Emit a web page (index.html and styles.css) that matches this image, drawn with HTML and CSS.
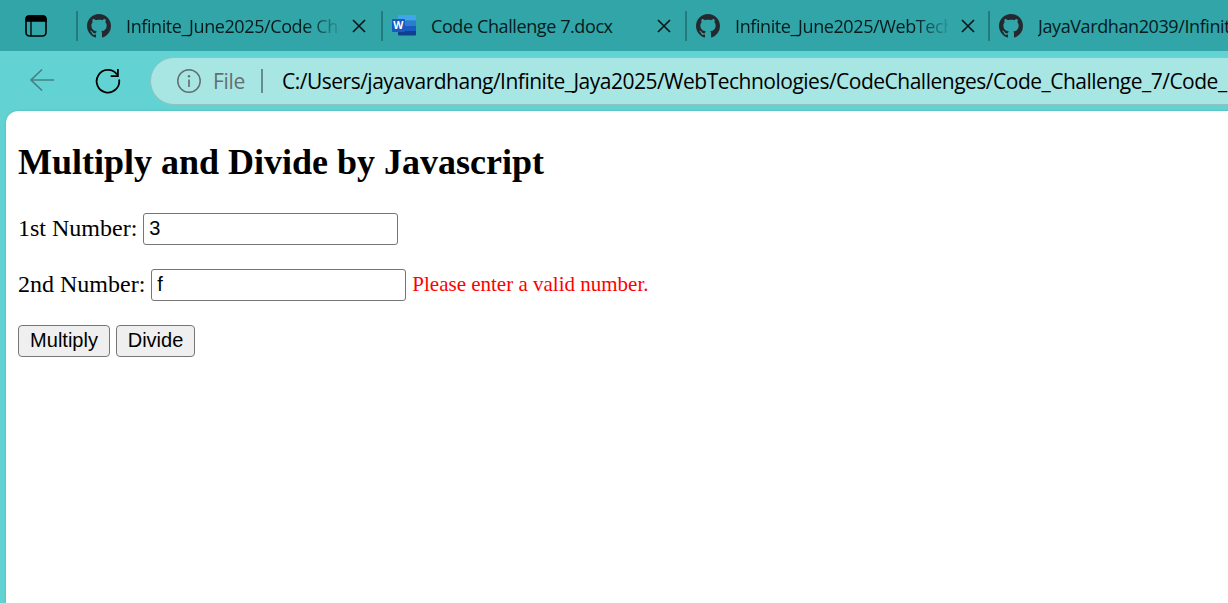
FILE: index.html
```html
<!DOCTYPE html>
<html lang="en">
<head>
<meta charset="utf-8">
<title>Multiply and Divide</title>
<link rel="stylesheet" href="styles.css">
</head>
<body>
<svg class="defs" aria-hidden="true">
  <symbol id="github" viewBox="0 0 16 16"><path fill="#24292f" d="M8 0C3.58 0 0 3.58 0 8c0 3.54 2.29 6.53 5.47 7.59.4.07.55-.17.55-.38 0-.19-.01-.82-.01-1.49-2.01.37-2.53-.49-2.69-.94-.09-.23-.48-.94-.82-1.13-.28-.15-.68-.52-.01-.53.63-.01 1.08.58 1.23.82.72 1.21 1.87.87 2.33.66.07-.52.28-.87.51-1.07-1.78-.2-3.64-.89-3.64-3.95 0-.87.31-1.59.82-2.15-.08-.2-.36-1.02.08-2.12 0 0 .67-.21 2.2.82.64-.18 1.32-.27 2-.27s1.36.09 2 .27c1.53-1.04 2.2-.82 2.2-.82.44 1.1.16 1.92.08 2.12.51.56.82 1.27.82 2.15 0 3.07-1.87 3.75-3.65 3.95.29.25.54.73.54 1.48 0 1.07-.01 1.93-.01 2.2 0 .21.15.46.55.38A8.01 8.01 0 0 0 16 8c0-4.42-3.58-8-8-8z"/></symbol>
  <symbol id="close" viewBox="0 0 14 14"><path d="M1 1l12 12M13 1L1 13" fill="none" stroke="#0a1a1b" stroke-width="1.7"/></symbol>
</svg>
<div class="browser">
  <header class="tabs">
    <div class="workspace">
      <svg width="22" height="22" viewBox="0 0 22 22"><rect x="1" y="1" width="20" height="20" rx="3.5" fill="none" stroke="#000" stroke-width="1.6"/><path d="M1 6V4a3 3 0 0 1 3-3h14a3 3 0 0 1 3 3v2zM6 6v15" stroke="#000" stroke-width="1.3"/></svg>
    </div>
    <div class="tab tab-first">
      <svg class="favicon"><use href="#github"/></svg>
      <span class="title fade">Infinite_June2025/Code Challenge</span>
      <svg class="close"><use href="#close"/></svg>
    </div>
    <div class="tab tab-word">
      <svg class="favicon" viewBox="0 0 24 24"><path fill="#41a5ee" d="M7 1h16a1 1 0 0 1 1 1v4.500H6V2a1 1 0 0 1 1-1z"/><path fill="#2b7cd3" d="M6 6.500h18V12H6z"/><path fill="#185abd" d="M6 12h18v5H6z"/><path fill="#103f91" d="M6 17h18v3.500a1 1 0 0 1-1 1H7a1 1 0 0 1-1-1z"/><rect y="5" width="13" height="13" rx="1" fill="#185abd"/><text class="word-letter" x="6.400" y="15.400">W</text></svg>
      <span class="title">Code Challenge 7.docx</span>
      <svg class="close"><use href="#close"/></svg>
    </div>
    <div class="tab tab-third">
      <svg class="favicon"><use href="#github"/></svg>
      <span class="title fade">Infinite_June2025/WebTechnologies</span>
      <svg class="close"><use href="#close"/></svg>
    </div>
    <div class="tab tab-last">
      <svg class="favicon"><use href="#github"/></svg>
      <span class="title">JayaVardhan2039/Infinite</span>
    </div>
  </header>
  <nav class="toolbar">
    <svg class="back" viewBox="0 0 26 24"><path d="M25 12H2M13 1.500L2 12l11 10.500" fill="none" stroke="#438386" stroke-width="1.700"/></svg>
    <svg class="reload" viewBox="0 0 26 26"><path d="M24.100 11.500A11.300 11.300 0 1 1 22 6.500M22.900 1v7.200h-7.200" fill="none" stroke="#000" stroke-width="1.800"/></svg>
    <div class="address">
      <svg class="info" viewBox="0 0 24 24"><circle cx="12" cy="12" r="11.200" fill="none" stroke="#626f70" stroke-width="1.500"/><path d="M12 10.500v7.500" stroke="#626f70" stroke-width="1.700"/><circle cx="12" cy="7.200" r="1.200" fill="#626f70"/></svg>
      <span class="scheme">File</span>
      <span class="divider"></span>
      <span class="url">C:/Users/jayavardhang/Infinite_Jaya2025/WebTechnologies/CodeChallenges/Code_Challenge_7/Code_</span>
    </div>
  </nav>
  <main class="page">
    <h2>Multiply and Divide by Javascript</h2>
    <div class="row"><label for="n1">1st Number:</label><input id="n1" type="text" value="3"></div>
    <div class="row"><label for="n2">2nd Number:</label><input id="n2" type="text" value="f"><span class="error">Please enter a valid number.</span></div>
    <div class="row"><button>Multiply</button><button class="divide">Divide</button></div>
  </main>
</div>
</body>
</html>
```
FILE: styles.css
```css
* { box-sizing: border-box; }
body { margin: 0; overflow: hidden; }
.defs { display: none; }
svg { flex: none; display: block; }
.browser { width: 1228px; height: 603px; overflow: hidden; display: flex; flex-direction: column; background: #62d2d2; font-family: "Open Sans", sans-serif; }
.tabs { height: 51px; flex: none; display: flex; align-items: center; background: #31a5a8; overflow: hidden; }
.workspace { width: 76px; padding-left: 25px; flex: none; }
.tab { display: flex; align-items: center; height: 30px; flex: none; padding-left: 9px; border-left: 2px solid #227c7e; margin-top: 1px; }
.tab-first { width: 305px; }
.tab-word { width: 304px; }
.tab-third { width: 303px; }
.tab-last { width: 260px; }
.favicon { width: 24px; height: 24px; }
.title { margin-left: 15px; width: 213px; font-size: 18px; line-height: 28px; margin-top: -1px; white-space: nowrap; overflow: hidden; color: #051b1c; letter-spacing: -0.400px; }
.fade { mask-image: linear-gradient(to right, #000 84%, transparent 102%); }
.close { width: 14px; height: 14px; margin-left: 13px; }
.word-letter { font: bold 10.500px "Open Sans", sans-serif; fill: #fff; text-anchor: middle; }
.toolbar { height: 60px; flex: none; display: flex; align-items: center; padding-left: 29px; }
.back { width: 26px; height: 24px; margin-top: -2px; }
.reload { width: 26px; height: 26px; margin-left: 40px; }
.address { height: 48px; width: 1110px; flex: none; margin-left: 29px; border: 1px solid #91c2c2; border-radius: 24px; background: #a8e6e4; display: flex; align-items: center; padding-left: 26px; white-space: nowrap; font-size: 21px; }
.info { width: 24px; height: 24px; }
.scheme { margin-left: 12px; width: 36px; color: #626f70; letter-spacing: -0.300px; }
.divider { width: 2px; height: 24px; margin-left: 12px; background: #668d8d; }
.url { margin-left: 19px; color: #000; letter-spacing: -0.500px; }
.page { flex: 1; margin-left: 6px; padding: 31px 0 0 12px; background: #fff; border-top-left-radius: 12px; font: 24px "Liberation Serif", serif; color: #000; box-shadow: 0 0 2px rgba(0, 60, 60, .25); }
h2 { margin: 0 0 30px; font-size: 36px; line-height: 41px; }
.row { height: 32px; display: flex; align-items: center; margin-bottom: 24px; white-space: nowrap; }
label { line-height: 28px; margin: -2px 6px 0 0; }
input { width: 255px; height: 32px; border: 1px solid #767676; border-radius: 3px; padding: 0 5px 2px; font: 20px "Liberation Sans", sans-serif; color: #000; background: #fff; }
.error { margin: -2px 0 0 6px; color: red; font-size: 21px; }
button { width: 92px; height: 32px; padding: 0 0 2px; border: 1px solid #767676; border-radius: 4px; background: #efefef; font: 20px "Liberation Sans", sans-serif; color: #000; }
.divide { width: 79px; margin-left: 6px; }
```
